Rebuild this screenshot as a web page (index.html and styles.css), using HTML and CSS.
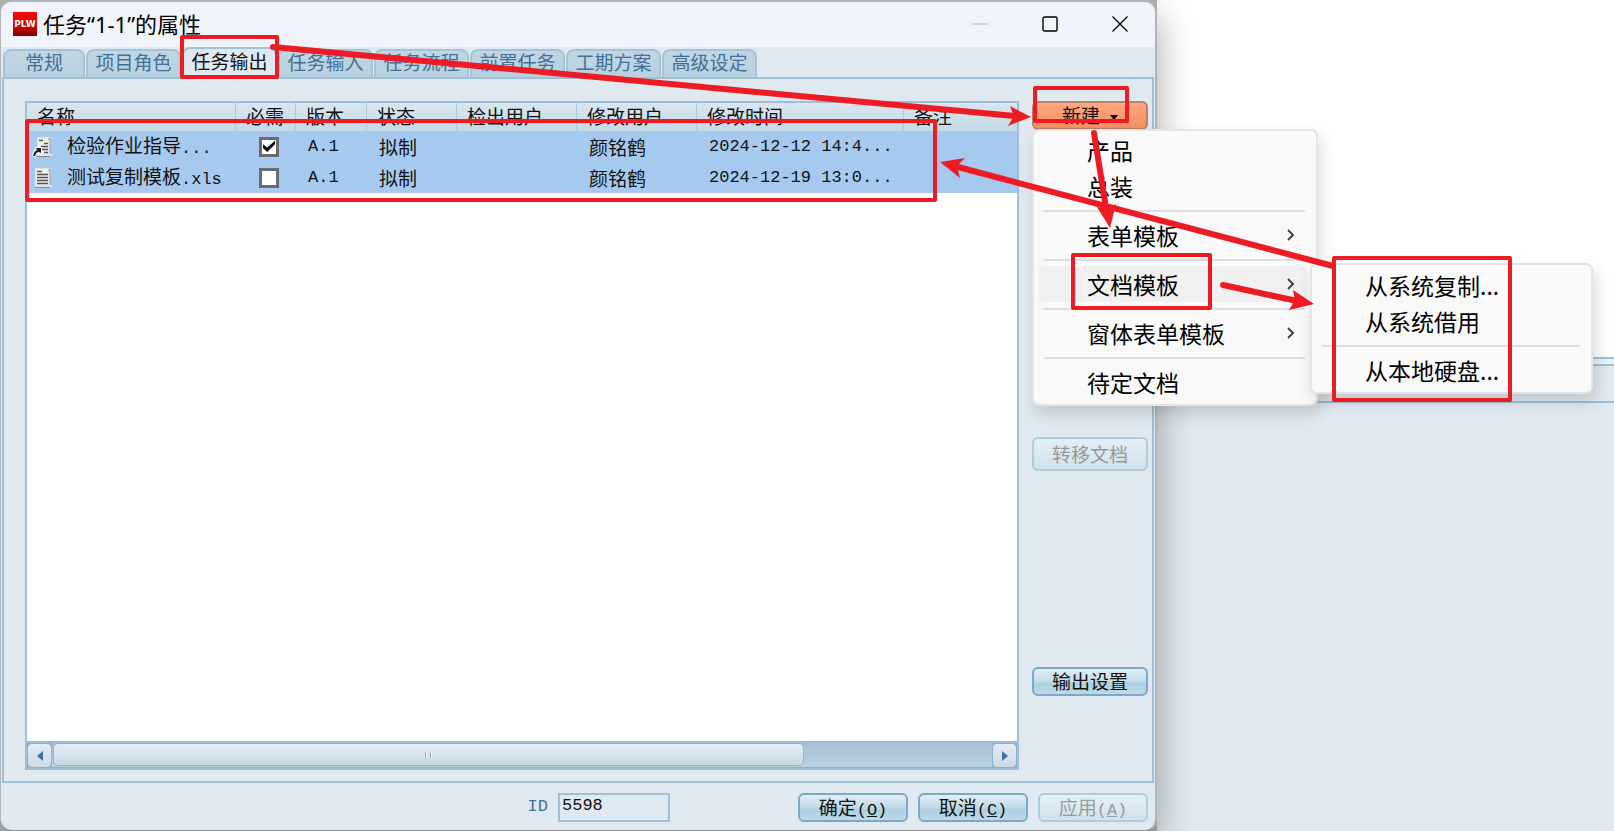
FILE: index.html
```html
<!DOCTYPE html>
<html lang="zh-CN">
<head>
<meta charset="utf-8">
<title>任务“1-1”的属性</title>
<link rel="stylesheet" href="styles.css">
</head>
<body>
<main class="dialog">
  <header class="titlebar">
    <svg class="logo" viewBox="0 0 24 24" aria-hidden="true">
      <defs><linearGradient id="lg" x1="0" y1="0" x2="0" y2="1"><stop offset="0" stop-color="#ff0808"/><stop offset=".6" stop-color="#d40000"/><stop offset="1" stop-color="#840000"/></linearGradient></defs>
      <rect width="24" height="24" fill="url(#lg)"/>
      <text x="12" y="15" text-anchor="middle">PLW</text>
    </svg>
    <h1>任务“1-1”的属性</h1>
    <button class="win-btn" type="button" aria-label="最小化" disabled><svg viewBox="0 0 16 16"><path d="M0 8h16" stroke="#c3c6cb"/></svg></button>
    <button class="win-btn" type="button" aria-label="最大化"><svg viewBox="0 0 16 16"><rect x="1" y="1" width="14" height="14" rx="1.500"/></svg></button>
    <button class="win-btn" type="button" aria-label="关闭"><svg viewBox="0 0 16 16"><path d="M.5.5l15 15M15.500.5l-15 15"/></svg></button>
  </header>

  <nav class="tabs" role="tablist">
    <button class="tab tab-first" role="tab" type="button">常规</button>
    <button class="tab" role="tab" type="button">项目角色</button>
    <button class="tab active" role="tab" type="button" aria-selected="true">任务输出</button>
    <button class="tab" role="tab" type="button">任务输入</button>
    <button class="tab" role="tab" type="button">任务流程</button>
    <button class="tab" role="tab" type="button">前置任务</button>
    <button class="tab" role="tab" type="button">工期方案</button>
    <button class="tab" role="tab" type="button">高级设定</button>
  </nav>

  <section class="panel">
    <div class="grid-box">
      <table class="files">
        <colgroup><col class="c-name"><col class="c-need"><col class="c-ver"><col class="c-state"><col class="c-user"><col class="c-user"><col class="c-time"><col></colgroup>
        <thead>
          <tr><th>名称</th><th>必需</th><th>版本</th><th>状态</th><th>检出用户</th><th>修改用户</th><th>修改时间</th><th>备注</th></tr>
        </thead>
        <tbody>
          <tr>
            <td class="name"><div class="file">
              <svg class="doc" viewBox="0 0 22 22" aria-hidden="true"><path d="M5 1h12q3 0 3 3h-2v14h2q0 3-3 3H5z" fill="#e4e4e2"/><path d="M6 2h10v16H6z" fill="#eeeeec"/><path d="M17 2q2 0 2 2h-2zM18 5v13" stroke="#aaa" fill="#ccc"/><path d="M5 20.500h13" stroke="#888"/><path d="M7 4.500h4M12 7.500h4M9 10.500h7M10 13.500h6M12 16.500h4" stroke="#555" stroke-width="1.500"/><path d="M0 20q1-6 4-7l-2-2h8v8l-2-3q-3 0-5 5z" fill="#fff"/><path d="M1 20q1-5 4-6l-1-2h5v5l-2-1q-3 0-4 4z" fill="#222"/></svg>
              <span>检验作业指导<span class="mono">...</span></span></div></td>
            <td class="need"><input type="checkbox" aria-label="必需" checked></td>
            <td class="mono">A.1</td><td>拟制</td><td></td><td>颜铭鹤</td><td class="mono">2024-12-12 14:4...</td><td></td>
          </tr>
          <tr>
            <td class="name"><div class="file">
              <svg class="doc" viewBox="0 0 22 22" aria-hidden="true"><path d="M3 1h14q3 0 3 3h-2v14h2q0 3-3 3H3z" fill="#e4e4e2"/><path d="M4 2h12v16H4z" fill="#eeeeec"/><path d="M17 2q2 0 2 2h-2zM18 5v13" stroke="#aaa" fill="#ccc"/><path d="M3 20.500h15" stroke="#888"/><path d="M5 4.500h5M5 7.500h11M5 10.500h11M5 13.500h11M5 16.500h11" stroke="#555" stroke-width="1.500"/></svg>
              <span>测试复制模板<span class="mono">.xls</span></span></div></td>
            <td class="need"><input type="checkbox" aria-label="必需"></td>
            <td class="mono">A.1</td><td>拟制</td><td></td><td>颜铭鹤</td><td class="mono">2024-12-19 13:0...</td><td></td>
          </tr>
        </tbody>
      </table>
      <div class="scrollbar">
        <button class="arrow" type="button" aria-label="向左滚动"><svg viewBox="0 0 6 10"><path d="M6 0v10L0 5z"/></svg></button>
        <div class="track"><div class="thumb"><i></i><i></i></div></div>
        <button class="arrow" type="button" aria-label="向右滚动"><svg viewBox="0 0 6 10"><path d="M0 0v10L6 5z"/></svg></button>
      </div>
    </div>

    <div class="actions">
      <div class="new-wrap">
        <button class="btn btn-new" type="button" aria-haspopup="menu">新建<svg class="caret" viewBox="0 0 8 5"><path d="M0 0h8L4 5z"/></svg></button>
        <div class="menu menu-main" role="menu">
          <button role="menuitem" type="button">产品</button>
          <button role="menuitem" type="button">总装</button>
          <hr>
          <button role="menuitem" type="button">表单模板<svg class="chev" viewBox="0 0 8 12"><path d="M1 1l5 5-5 5"/></svg></button>
          <hr>
          <button class="hover" role="menuitem" type="button">文档模板<svg class="chev" viewBox="0 0 8 12"><path d="M1 1l5 5-5 5"/></svg></button>
          <hr>
          <button role="menuitem" type="button">窗体表单模板<svg class="chev" viewBox="0 0 8 12"><path d="M1 1l5 5-5 5"/></svg></button>
          <hr>
          <button role="menuitem" type="button">待定文档</button>
          <div class="menu menu-sub" role="menu">
            <button role="menuitem" type="button">从系统复制...</button>
            <button role="menuitem" type="button">从系统借用</button>
            <hr>
            <button role="menuitem" type="button">从本地硬盘...</button>
          </div>
        </div>
      </div>
      <button class="btn btn-move" type="button" disabled>转移文档</button>
      <button class="btn btn-output" type="button">输出设置</button>
    </div>
  </section>

  <footer class="footer">
    <label for="task-id">ID</label>
    <input class="id-input" id="task-id" type="text" value="5598">
    <button class="btn" type="button">确定<span class="mono">(<u>O</u>)</span></button>
    <button class="btn" type="button">取消<span class="mono">(<u>C</u>)</span></button>
    <button class="btn" type="button" disabled>应用<span class="mono">(<u>A</u>)</span></button>
  </footer>
</main>

<aside class="backdrop">
  <div class="sheet"></div>
  <div class="strip"></div>
  <div class="band"></div>
  <div class="fill"></div>
</aside>

<svg class="marks" viewBox="0 0 1614 831" preserveAspectRatio="none" aria-hidden="true">
  <g fill="none" stroke="#ed1c24" stroke-width="4" stroke-linejoin="round">
    <rect x="182" y="37" width="95" height="40"/>
    <rect x="27" y="121" width="908" height="79"/>
    <rect x="1035" y="88" width="92" height="33"/>
    <rect x="1073" y="255" width="137" height="53"/>
    <rect x="1334" y="258" width="176" height="142"/>
  </g>
  <g fill="none" stroke="#ed1c24" stroke-width="6" stroke-linecap="round">
    <path d="M273 47L1015 116"/>
    <path d="M1094 133L1106 208"/>
    <path d="M1333 266L958 167"/>
    <path d="M1223 285L1297 301"/>
  </g>
  <g fill="#ed1c24">
    <path d="M1031 117L1010 106L1014 116L1008 126z"/>
    <path d="M1110 228L1097 207L1107 208L1116 204z"/>
    <path d="M940 162L965 158L957 166L960 178z"/>
    <path d="M1314 304L1293 290L1295 300L1289 310z"/>
  </g>
</svg>
</body>
</html>
```
FILE: styles.css
```css
* { box-sizing: border-box; }

body {
  margin: 0;
  min-height: 100vh;
  display: grid;
  grid-template-columns: minmax(0, 1fr) 457px;
  position: relative;
  overflow: hidden;
  background: #b5b5b5;
  color: #111;
  font: 19px/24px "Noto Sans CJK SC", "Noto Sans", sans-serif;
}

button, input { font: inherit; color: inherit; margin: 0; }
button { border: 0; background: none; padding: 0; }

.mono { font-family: "Liberation Mono", "Noto Sans CJK SC", monospace; font-size: 17px; }

.dialog {
  position: relative;
  z-index: 1;
  display: flex;
  flex-direction: column;
  min-width: 0;
  border: 2px solid #b2b4b7;
  border-left-width: 1px;
  border-bottom: 1px solid #8d9196;
  border-radius: 12px;
  background: #e1e9f0;
  box-shadow: 2px 14px 36px rgba(0, 0, 0, .32);
}

.titlebar {
  display: flex;
  align-items: center;
  height: 45px;
  padding-left: 12px;
  padding-bottom: 2px;
  border-radius: 11px 11px 0 0;
  background: #f0f3fa;
}
.logo { width: 24px; height: 24px; }
.logo text { font: bold 9px "DejaVu Sans", sans-serif; fill: #fff; }
.titlebar h1 {
  flex: 1;
  margin: 0;
  padding-left: 6px;
  font: 22px/30px "Noto Sans", "Noto Sans CJK SC", sans-serif;
  color: #000;
}
.win-btn { width: 70px; height: 43px; display: flex; align-items: center; justify-content: center; }
.win-btn svg { width: 16px; height: 16px; fill: none; stroke: #000; stroke-width: 1.4; }

.tabs {
  display: flex;
  align-items: flex-end;
  gap: 1px;
  height: 30px;
  padding-left: 2px;
}
.tab {
  width: 95px;
  height: 28px;
  padding-bottom: 4px;
  border: 2px solid #a1c4d9;
  border-bottom: 0;
  border-radius: 8px 8px 0 0;
  background: linear-gradient(#c0d6e3, #b8d1de);
  color: #446f99;
  line-height: 22px;
  white-space: nowrap;
}
.tab-first { width: 82px; }
.tab.active { height: 32px; margin-bottom: -2px; padding-bottom: 6px; background: #e1e9f0; color: #111; z-index: 1; }

.panel {
  flex: 1;
  display: flex;
  gap: 13px;
  margin-right: 1px;
  margin-left: 1px;
  padding: 22px 4px 11px 21px;
  border: 2px solid #9dc0d6;
}

.grid-box {
  flex: 1;
  min-width: 0;
  display: flex;
  flex-direction: column;
  justify-content: space-between;
  border: 2px solid #9dc0d6;
  background: #fff;
}

.files { width: 100%; table-layout: fixed; border-collapse: separate; border-spacing: 0; }
.c-name { width: 209px; }
.c-need { width: 60px; }
.c-ver { width: 71px; }
.c-state { width: 90px; }
.c-user { width: 120px; }
.c-time { width: 207px; }
.files th {
  height: 28px;
  padding: 0 0 2px 10px;
  border-right: 1px solid #a9cbde;
  background: linear-gradient(#dae6ef, #c4dae5);
  font-weight: 400;
  text-align: left;
}
.files th:last-child { border-right: 0; }
.files td {
  height: 31px;
  padding: 0 0 0 12px;
  background: #a6c9ef;
  white-space: nowrap;
}
.files .name { padding-left: 5px; }
.files .need { padding-left: 23px; }
.file { display: flex; align-items: center; gap: 13px; }
.doc { width: 22px; height: 22px; fill: none; }

input[type="checkbox"] {
  appearance: none;
  display: block;
  width: 20px;
  height: 20px;
  border: 3px solid #6b6b6b;
  background: #fff;
}
input[type="checkbox"]:checked::before {
  content: "";
  display: block;
  width: 12px;
  height: 12px;
  margin: 1px;
  background: #111;
  clip-path: polygon(0 32%, 36% 58%, 100% 0, 100% 32%, 36% 95%, 0 64%);
}

.scrollbar {
  display: flex;
  height: 27px;
  border-top: 2px solid #9dbdd3;
  background: #92b3cd;
}
.arrow {
  width: 25px;
  border: 1px solid #8fb3ce;
  border-radius: 5px;
  background: linear-gradient(#e6ebf5, #cbdbe4);
  display: flex;
  align-items: center;
  justify-content: center;
}
.arrow svg { width: 6px; height: 10px; fill: #3c74a5; }
.track { flex: 1; padding: 0 0 1px 1px; background: linear-gradient(#a9c1d8, #b8d1de); border-bottom: 1px solid #92b3cd; }
.thumb {
  display: flex;
  align-items: center;
  justify-content: center;
  gap: 3px;
  width: 80%;
  height: 100%;
  border: 1px solid #8fb3ce;
  border-radius: 5px;
  background: linear-gradient(#e6ebf5, #c6d9e2);
}
.thumb i { width: 2px; height: 6px; background: #8fb0c9; border-right: 1px solid #fff; }

.actions { width: 116px; display: flex; flex-direction: column; }
.btn {
  height: 29px;
  padding-bottom: 2px;
  border: 2px solid #79a9ca;
  border-radius: 6px;
  background: linear-gradient(#e2eef4, #c5dde8 45%, #acd0e1 60%, #bdd9e6);
  line-height: 23px;
  white-space: nowrap;
}
.btn:disabled {
  border-color: #aacde0;
  background: linear-gradient(#e3eff4, #cfe2eb);
  color: #999;
}
.new-wrap { position: relative; }
.btn-new {
  width: 100%;
  padding-bottom: 4px;
  border-color: #ba8068;
  background: linear-gradient(#ffa882, #f68e62);
}
.caret { width: 8px; height: 5px; margin-left: 10px; vertical-align: 3px; }
.btn-move { height: 34px; margin-top: 307px; }
.btn-output { margin-top: auto; margin-bottom: 74px; }

.menu {
  position: absolute;
  border: 2px solid #e4e4e4;
  border-radius: 7px;
  background: #f9f9f9;
  box-shadow: 3px 8px 16px rgba(0, 0, 0, .15);
  color: #000;
  font-size: 23px;
}
.menu button {
  display: flex;
  align-items: center;
  justify-content: space-between;
  width: calc(100% - 14px);
  height: 36px;
  margin: 0 7px 0 5px;
  padding: 0 12px 0 48px;
  border-radius: 6px;
  line-height: 34px;
  white-space: nowrap;
}
.menu button.hover { background: #f0f0f0; }
.menu hr { height: 2px; margin: 6px 11px 5px 10px; border: 0; background: #dedede; }
.chev { width: 8px; height: 12px; fill: none; stroke: #444; stroke-width: 2; }
.menu-main { top: 28px; left: 0; width: 286px; padding: 1px 0 4px; }
.menu-sub { top: 132px; left: 276px; width: 283px; padding: 2px 0 4px; }

.footer {
  display: flex;
  align-items: center;
  justify-content: flex-end;
  gap: 10px;
  height: 47px;
  padding: 1px 7px 0 0;
}
.footer label { color: #446f99; font: 17px/24px "Liberation Mono", monospace; }
.id-input {
  width: 112px;
  height: 29px;
  margin-right: 118px;
  padding: 0 0 3px 2px;
  border: 2px solid #9dc0d6;
  background: #e1e9f0;
  font: 17px/22px "Liberation Mono", monospace;
}
.footer .btn { width: 110px; }

.backdrop { display: flex; flex-direction: column; background: #fff; }
.sheet { height: 43vh; }
.strip { height: 9px; border: 2px solid #9dc0d6; border-width: 2px 0; background: #e9f1f6; }
.band { height: 37px; border-bottom: 2px solid #9dc0d6; background: #e1e9f0; }
.fill { flex: 1; background: #e1e9f0; }

.marks {
  position: absolute;
  inset: 0;
  z-index: 2;
  width: 100%;
  height: 100%;
  pointer-events: none;
}
```
